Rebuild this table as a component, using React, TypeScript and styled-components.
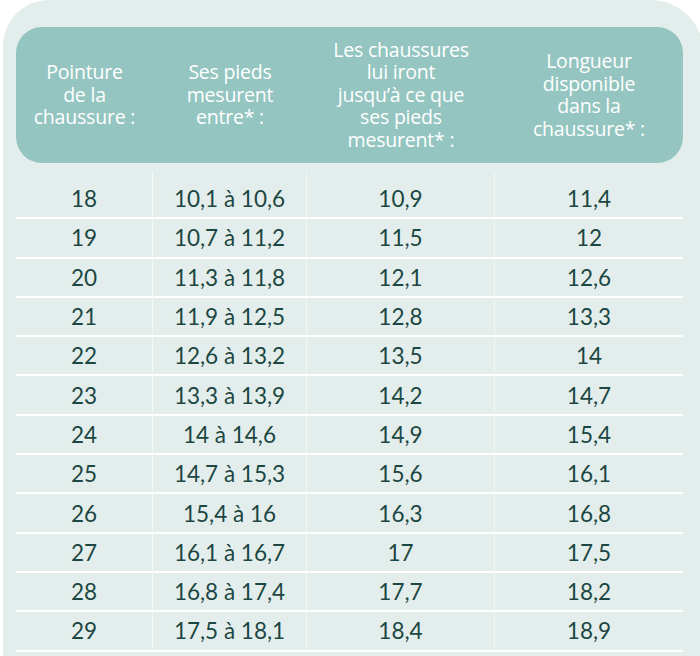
import React from 'react';
import styled, { createGlobalStyle } from 'styled-components';

const GlobalStyle = createGlobalStyle`
  html, body {
    margin: 0;
    padding: 0;
    background: #ffffff;
    overflow: hidden;
  }
`;

// colonnes : pointure, pieds, "jusqu'à", longueur disponible
const COLUMNS = ['137px', '154px', '188px', '188px'];

const headers: string[][] = [
  ['Pointure', 'de la', 'chaussure :'],
  ['Ses pieds', 'mesurent', 'entre* :'],
  ['Les chaussures', 'lui iront', 'jusqu’à ce que', 'ses pieds', 'mesurent* :'],
  ['Longueur', 'disponible', 'dans la', 'chaussure* :'],
];

const rows: string[][] = [
  ['18', '10,1 à 10,6', '10,9', '11,4'],
  ['19', '10,7 à 11,2', '11,5', '12'],
  ['20', '11,3 à 11,8', '12,1', '12,6'],
  ['21', '11,9 à 12,5', '12,8', '13,3'],
  ['22', '12,6 à 13,2', '13,5', '14'],
  ['23', '13,3 à 13,9', '14,2', '14,7'],
  ['24', '14 à 14,6', '14,9', '15,4'],
  ['25', '14,7 à 15,3', '15,6', '16,1'],
  ['26', '15,4 à 16', '16,3', '16,8'],
  ['27', '16,1 à 16,7', '17', '17,5'],
  ['28', '16,8 à 17,4', '17,7', '18,2'],
  ['29', '17,5 à 18,1', '18,4', '18,9'],
];

const App = () => {
  return (
    <>
      <GlobalStyle />
      <Card>
        <Header>
          {headers.map((lines, i) => (
            <HeaderCell key={i}>
              {lines.map((line, j) => (
                <span key={j}>{line}</span>
              ))}
            </HeaderCell>
          ))}
        </Header>
        <Body>
          {rows.map((row, r) =>
            row.map((value, c) => (
              <Cell key={`${r}-${c}`} $first={r === 0} $last={c === row.length - 1}>
                {value}
              </Cell>
            )),
          )}
        </Body>
      </Card>
    </>
  );
};

export default App;

const Card = styled.div`
  box-sizing: border-box;
  margin-left: 3px;
  width: 701px;
  height: 656px;
  overflow: hidden;
  padding: 27px 0 0 13px;
  background: #e3eeec;
  border-radius: 46px 54px 0 0;
`;

const Header = styled.div`
  display: grid;
  grid-template-columns: ${COLUMNS.join(' ')};
  width: 667px;
  height: 136px;
  background: #94c5c0;
  border-radius: 26px;
`;

const HeaderCell = styled.div`
  display: flex;
  flex-direction: column;
  align-items: center;
  justify-content: center;
  color: #ffffff;
  font-family: 'Open Sans', 'Noto Sans', sans-serif;
  font-size: 19.5px;
  line-height: 22.5px;
  letter-spacing: -0.2px;
  text-align: center;
  white-space: nowrap;
`;

const Body = styled.div`
  display: grid;
  grid-template-columns: ${COLUMNS.join(' ')};
  width: 667px;
  margin-top: 9px;
`;

const Cell = styled.div<{ $first: boolean; $last: boolean }>`
  box-sizing: border-box;
  display: flex;
  align-items: center;
  justify-content: center;
  height: ${(p) => (p.$first ? '47.3px' : '39.3px')};
  padding-top: ${(p) => (p.$first ? '8px' : '0')};
  border-bottom: 2px solid #ffffff;
  border-right: ${(p) => (p.$last ? 'none' : '1.5px solid #f3f8f7')};
  color: #1b4642;
  font-family: 'Lato', 'Noto Sans', sans-serif;
  font-size: 22.5px;
  font-weight: 400;
`;
